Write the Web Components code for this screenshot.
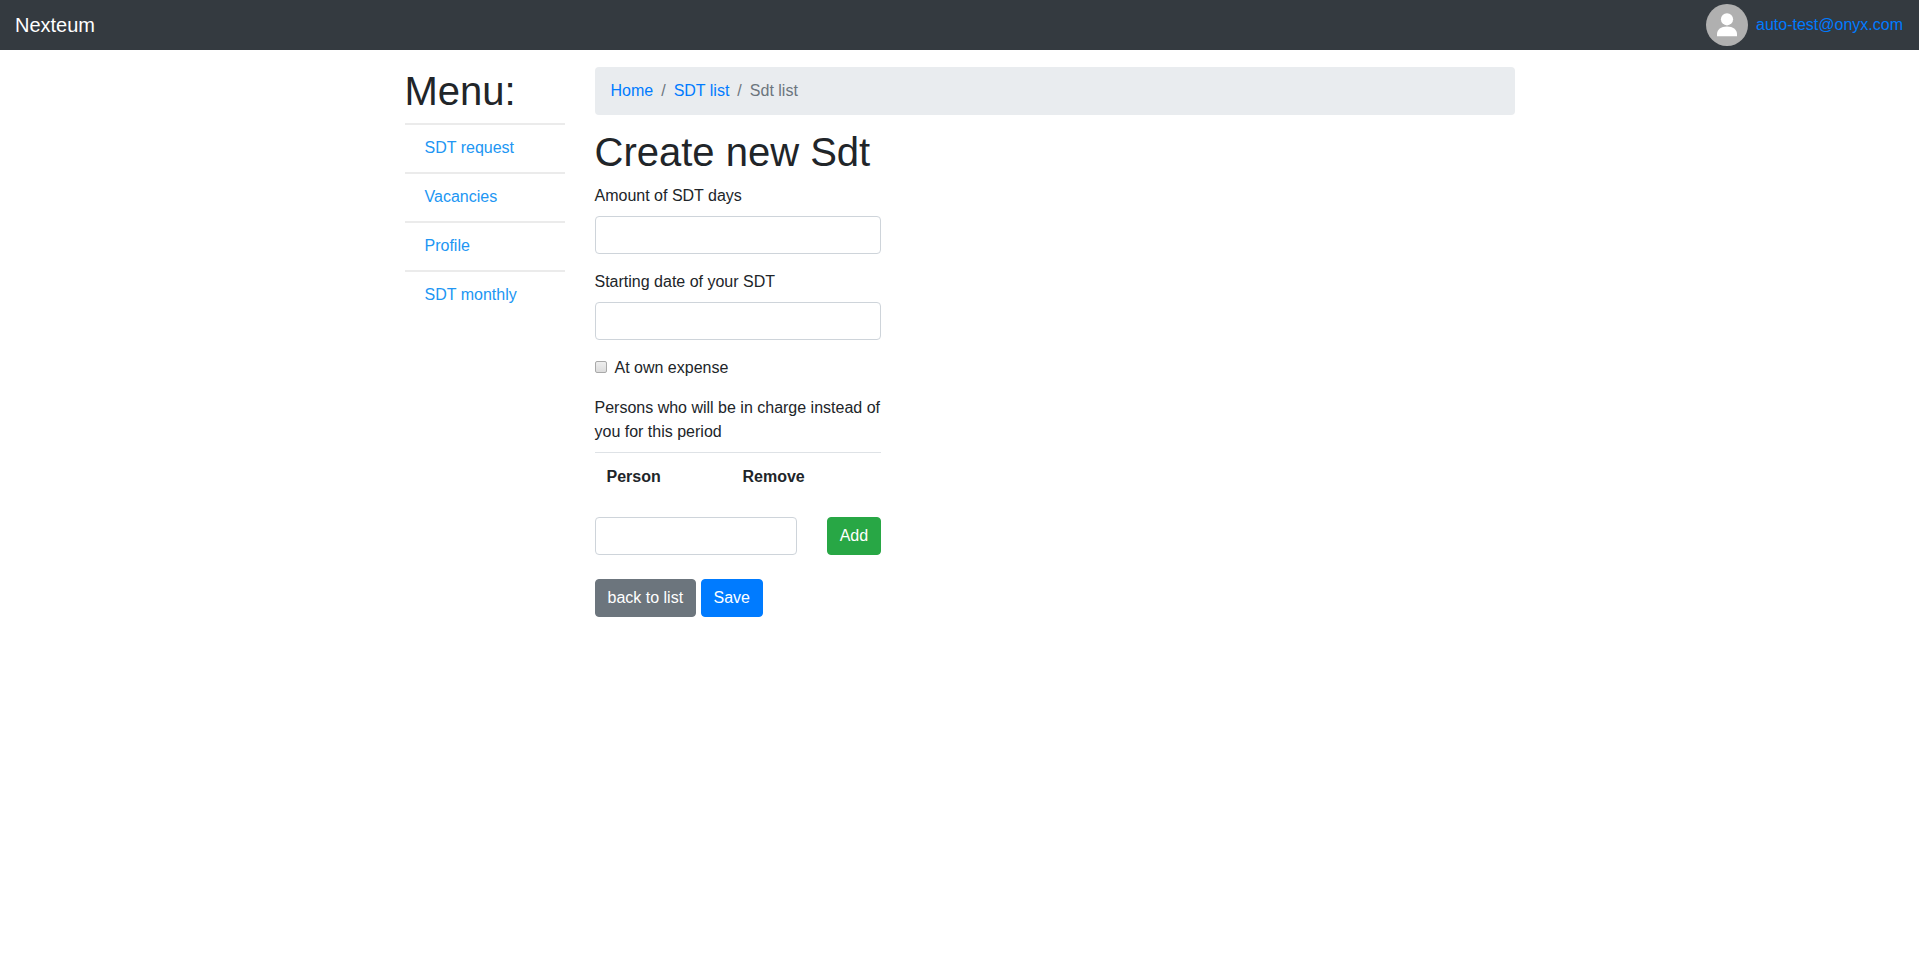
<!DOCTYPE html>
<html lang="en">
<head>
<meta charset="utf-8">
<title>Nexteum</title>
<style>
body{margin:0;font:400 16px/24px "Liberation Sans",Arial,sans-serif;color:#212529;background:#fff}
</style>
</head>
<body>
<nx-app></nx-app>
<script>
const define = (name, html) => customElements.define(name, class extends HTMLElement {
  constructor() {
    super();
    const t = document.createElement('template');
    t.innerHTML = html;
    this.attachShadow({ mode: 'open' }).append(t.content.cloneNode(true));
  }
});

define('nx-navbar', `
<style>
:host{display:flex;justify-content:space-between;align-items:center;box-sizing:border-box;height:50px;padding:0 16px 0 15px;background:#343a40}
.brand{font-size:20px;line-height:30px;color:#fff}
.user{display:flex;align-items:center;gap:8px;color:#007bff}
svg{display:block}
</style>
<span class="brand">Nexteum</span>
<div class="user">
<svg width="42" height="42" viewBox="0 0 42 42"><circle cx="21" cy="21" r="21" fill="#b0b0b0"/><circle cx="21" cy="15.3" r="6.1" fill="#fff"/><path d="M11 32.3V30C11 25.500 15 22.500 21 22.500S31 25.500 31 30V32.300Z" fill="#fff"/></svg>
<slot></slot></div>`);

define('nx-menu-item', `
<style>:host{display:block;padding:11px 20px 12px;border-top:2px solid #ebebeb;color:#2196f3}</style><slot></slot>`);

define('nx-heading', `
<style>:host{display:block}h1{margin:0 0 8px;font-weight:400;font-size:40px;line-height:48px}</style><h1><slot></slot></h1>`);

define('nx-breadcrumb', `
<style>
:host{display:flex;padding:12px 16px;margin-bottom:12.6px;border-radius:4px;background:#e9ecef;color:#6c757d}
a{color:#007bff}i{font-style:normal;padding:0 8px}
</style><a>Home</a><i>/</i><a>SDT list</a><i>/</i><span>Sdt list</span>`);

define('nx-input', `
<style>
:host{display:block}
input{display:block;box-sizing:border-box;width:100%;height:38px;margin:0;padding:6px 12px;border:1px solid #ced4da;border-radius:4px;background:#fff;font:inherit}
</style><input type="text">`);

define('nx-field', `
<style>:host{display:block;margin-bottom:16px}label{display:block;margin-bottom:8px}</style><label><slot></slot></label><nx-input></nx-input>`);

define('nx-check', `
<style>
:host{display:flex;align-items:center;gap:8px;margin-bottom:16px}
.box{box-sizing:border-box;width:12px;height:12px;margin-bottom:2px;border:1px solid #a9a9a9;border-radius:2px;background:linear-gradient(#eee,#dcdcdc)}
</style><span class="box"></span><slot></slot>`);

define('nx-button', `
<style>
:host{display:block}
button{display:block;box-sizing:border-box;width:100%;margin:0;padding:6px 12px;border:1px solid var(--bg);border-radius:4px;background:var(--bg);color:#fff;font:inherit;line-height:24px}
</style><button><slot></slot></button>`);

define('nx-persons', `
<style>
:host{display:block}
p{margin:0 0 8px}
.head{display:grid;grid-template-columns:136px 1fr;padding:12px;border-top:1px solid #dee2e6;font-weight:700;margin-bottom:16px}
.add{display:flex;justify-content:space-between}
nx-input{width:202px}
</style>
<p>Persons who will be in charge instead of you for this period</p>
<div class="head"><span>Person</span><span>Remove</span></div>
<div class="add"><nx-input></nx-input><nx-button style="--bg:#28a745">Add</nx-button></div>`);

define('nx-form', `
<style>
:host{display:block;width:286.67px}
.actions{display:flex;gap:4.45px;margin-top:24px}
</style>
<nx-field>Amount of SDT days</nx-field>
<nx-field>Starting date of your SDT</nx-field>
<nx-check>At own expense</nx-check>
<nx-persons></nx-persons>
<div class="actions"><nx-button style="--bg:#6c757d">back to list</nx-button><nx-button style="--bg:#007bff">Save</nx-button></div>`);

define('nx-app', `
<style>
:host{display:block}
.page{display:grid;grid-template-columns:160px 920px;column-gap:30px;width:1110px;margin:17.4px auto 0}
</style>
<nx-navbar>auto-test@onyx.com</nx-navbar>
<div class="page">
<nav><nx-heading>Menu:</nx-heading><nx-menu-item>SDT request</nx-menu-item><nx-menu-item>Vacancies</nx-menu-item><nx-menu-item>Profile</nx-menu-item><nx-menu-item>SDT monthly</nx-menu-item></nav>
<main><nx-breadcrumb></nx-breadcrumb><nx-heading>Create new Sdt</nx-heading><nx-form></nx-form></main>
</div>`);
</script>
</body>
</html>
